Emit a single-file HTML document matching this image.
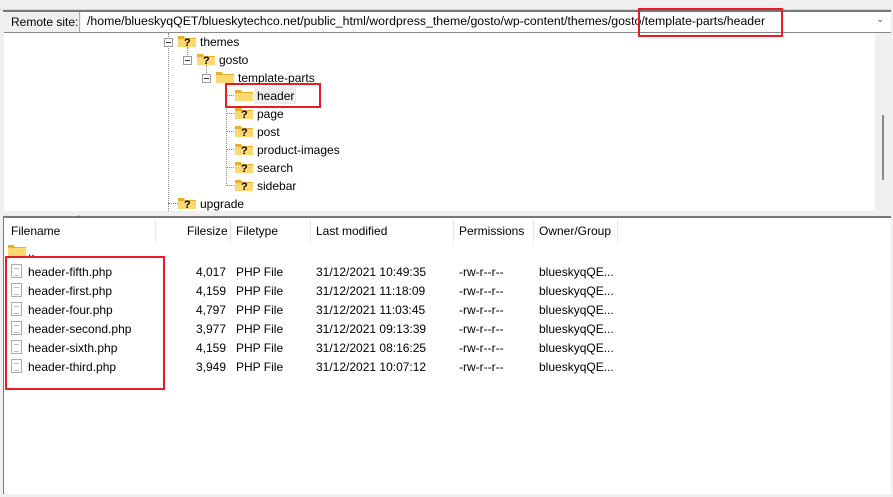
<!DOCTYPE html><html><head><style>
*{margin:0;padding:0;box-sizing:border-box}
body{width:893px;height:497px;background:#f0f0f0;font-family:"Liberation Sans",sans-serif;font-size:12px;color:#000;position:relative;overflow:hidden}
.a{position:absolute;white-space:nowrap}
.red{position:absolute;border:2px solid #e81c24}
.dv{position:absolute;border-left:1px dotted #888;width:0}
.dh{position:absolute;border-top:1px dotted #888;height:0}
.box{position:absolute;width:9px;height:9px;border:1px solid #999;background:#fff}
.box:after{content:"";position:absolute;left:1px;top:3px;width:5px;height:1px;background:#333}
.doc{position:absolute;width:11px;height:14px;border:1px solid #aaa;background:#fff}
.doc:after{content:"";position:absolute;left:2px;top:3px;width:5px;height:6px;border-top:1px solid #bbb;border-bottom:1px solid #bbb}
.sep{position:absolute;top:220px;width:1px;height:22px;background:#e5e5e5}
</style></head><body>
<div class="a" style="left:0;top:9px;width:893px;height:1px;background:#d8d8d8"></div>
<div class="a" style="left:3px;top:10px;width:888px;height:2px;background:#777"></div>
<div class="a" style="left:4px;top:12px;width:76px;height:20px;background:#f0f0f0;border-right:1px solid #aaa;padding:3px 0 0 7px">Remote site:</div>
<div class="a" style="left:81px;top:12px;width:810px;height:20px;background:#fff;padding:2px 0 0 6px;font-size:12.3px">/home/blueskyqQET/blueskytechco.net/public_html/wordpress_theme/gosto/wp-content/themes/gosto/template-parts/header</div>
<div class="a" style="left:876px;top:14px;color:#666;font-size:10px">&#8964;</div>
<div class="a" style="left:4px;top:32px;width:887px;height:1px;background:#888"></div>
<div class="a" style="left:4px;top:33px;width:871px;height:178px;background:#fff"></div>
<div class="a" style="left:875px;top:33px;width:16px;height:178px;background:#f0f0f0"></div>
<div class="a" style="left:882px;top:115px;width:2px;height:65px;background:#888"></div>
<svg width="0" height="0" style="position:absolute"><defs>
<g id="f"><path d="M0 2h6l1 2h11v9H0z" fill="#e8b02a"/><path d="M0 5h18v8H0z" fill="#fcd872"/></g>
<g id="q"><use href="#f"/><text x="6" y="12" font-family="Liberation Sans" font-weight="bold" font-size="11" fill="#000">?</text></g>
</defs></svg>
<div class="dv" style="left:168px;top:33px;height:178px"></div>
<div class="dv" style="left:187px;top:47px;height:14px"></div>
<div class="dv" style="left:206px;top:65px;height:14px"></div>
<div class="dv" style="left:226px;top:86px;height:100px"></div>
<div class="dh" style="left:226px;top:95px;width:8px"></div>
<div class="dh" style="left:226px;top:113px;width:8px"></div>
<div class="dh" style="left:226px;top:131px;width:8px"></div>
<div class="dh" style="left:226px;top:149px;width:8px"></div>
<div class="dh" style="left:226px;top:167px;width:8px"></div>
<div class="dh" style="left:226px;top:185px;width:8px"></div>
<div class="dh" style="left:168px;top:203px;width:10px"></div>
<div class="box" style="left:164px;top:38px"></div>
<div class="box" style="left:183px;top:56px"></div>
<div class="box" style="left:202px;top:74px"></div>
<svg class="a" style="left:178px;top:34px" width="18" height="14"><use href="#q"/></svg><div class="a" style="left:200px;top:35px">themes</div>
<svg class="a" style="left:197px;top:52px" width="18" height="14"><use href="#q"/></svg><div class="a" style="left:219px;top:53px">gosto</div>
<svg class="a" style="left:216px;top:70px" width="18" height="14"><use href="#f"/></svg><div class="a" style="left:238px;top:71px">template-parts</div>
<div class="a" style="left:254px;top:87px;width:42px;height:17px;background:#ececec"></div>
<svg class="a" style="left:235px;top:88px" width="18" height="14"><use href="#f"/></svg><div class="a" style="left:257px;top:89px">header</div>
<svg class="a" style="left:235px;top:106px" width="18" height="14"><use href="#q"/></svg><div class="a" style="left:257px;top:107px">page</div>
<svg class="a" style="left:235px;top:124px" width="18" height="14"><use href="#q"/></svg><div class="a" style="left:257px;top:125px">post</div>
<svg class="a" style="left:235px;top:142px" width="18" height="14"><use href="#q"/></svg><div class="a" style="left:257px;top:143px">product-images</div>
<svg class="a" style="left:235px;top:160px" width="18" height="14"><use href="#q"/></svg><div class="a" style="left:257px;top:161px">search</div>
<svg class="a" style="left:235px;top:178px" width="18" height="14"><use href="#q"/></svg><div class="a" style="left:257px;top:179px">sidebar</div>
<svg class="a" style="left:178px;top:196px" width="18" height="14"><use href="#q"/></svg><div class="a" style="left:200px;top:197px">upgrade</div>
<div class="red" style="left:638px;top:8px;width:145px;height:29px"></div>
<div class="red" style="left:225px;top:83px;width:96px;height:25px"></div>

<div class="a" style="left:3px;top:216px;width:888px;height:2px;background:#777"></div>
<div class="a" style="left:4px;top:218px;width:887px;height:276px;background:#fff"></div>
<div class="a" style="left:3px;top:218px;width:1px;height:276px;background:#777"></div>
<div class="a" style="left:75px;top:214px;font-size:9px;color:#666">&#8963;</div>
<div class="a" style="left:11px;top:224px">Filename</div>
<div class="a" style="left:187px;top:224px">Filesize</div>
<div class="a" style="left:236px;top:224px">Filetype</div>
<div class="a" style="left:316px;top:224px">Last modified</div>
<div class="a" style="left:459px;top:224px">Permissions</div>
<div class="a" style="left:539px;top:224px">Owner/Group</div>
<div class="sep" style="left:155px"></div><div class="sep" style="left:230px"></div><div class="sep" style="left:310px"></div><div class="sep" style="left:453px"></div><div class="sep" style="left:533px"></div><div class="sep" style="left:617px"></div>
<svg class="a" style="left:8px;top:243px" width="18" height="14"><use href="#f"/></svg><div class="a" style="left:28px;top:245px">..</div>
<div class="doc" style="left:11px;top:264px"></div><div class="a" style="left:28px;top:265px">header-fifth.php</div><div class="a" style="left:196px;top:265px">4,017</div><div class="a" style="left:236px;top:265px">PHP File</div><div class="a" style="left:316px;top:265px">31/12/2021 10:49:35</div><div class="a" style="left:459px;top:265px">-rw-r--r--</div><div class="a" style="left:539px;top:265px">blueskyqQE...</div>
<div class="doc" style="left:11px;top:283px"></div><div class="a" style="left:28px;top:284px">header-first.php</div><div class="a" style="left:196px;top:284px">4,159</div><div class="a" style="left:236px;top:284px">PHP File</div><div class="a" style="left:316px;top:284px">31/12/2021 11:18:09</div><div class="a" style="left:459px;top:284px">-rw-r--r--</div><div class="a" style="left:539px;top:284px">blueskyqQE...</div>
<div class="doc" style="left:11px;top:302px"></div><div class="a" style="left:28px;top:303px">header-four.php</div><div class="a" style="left:196px;top:303px">4,797</div><div class="a" style="left:236px;top:303px">PHP File</div><div class="a" style="left:316px;top:303px">31/12/2021 11:03:45</div><div class="a" style="left:459px;top:303px">-rw-r--r--</div><div class="a" style="left:539px;top:303px">blueskyqQE...</div>
<div class="doc" style="left:11px;top:321px"></div><div class="a" style="left:28px;top:322px">header-second.php</div><div class="a" style="left:196px;top:322px">3,977</div><div class="a" style="left:236px;top:322px">PHP File</div><div class="a" style="left:316px;top:322px">31/12/2021 09:13:39</div><div class="a" style="left:459px;top:322px">-rw-r--r--</div><div class="a" style="left:539px;top:322px">blueskyqQE...</div>
<div class="doc" style="left:11px;top:340px"></div><div class="a" style="left:28px;top:341px">header-sixth.php</div><div class="a" style="left:196px;top:341px">4,159</div><div class="a" style="left:236px;top:341px">PHP File</div><div class="a" style="left:316px;top:341px">31/12/2021 08:16:25</div><div class="a" style="left:459px;top:341px">-rw-r--r--</div><div class="a" style="left:539px;top:341px">blueskyqQE...</div>
<div class="doc" style="left:11px;top:359px"></div><div class="a" style="left:28px;top:360px">header-third.php</div><div class="a" style="left:196px;top:360px">3,949</div><div class="a" style="left:236px;top:360px">PHP File</div><div class="a" style="left:316px;top:360px">31/12/2021 10:07:12</div><div class="a" style="left:459px;top:360px">-rw-r--r--</div><div class="a" style="left:539px;top:360px">blueskyqQE...</div>
<div class="red" style="left:5px;top:256px;width:160px;height:134px"></div>
</body></html>
